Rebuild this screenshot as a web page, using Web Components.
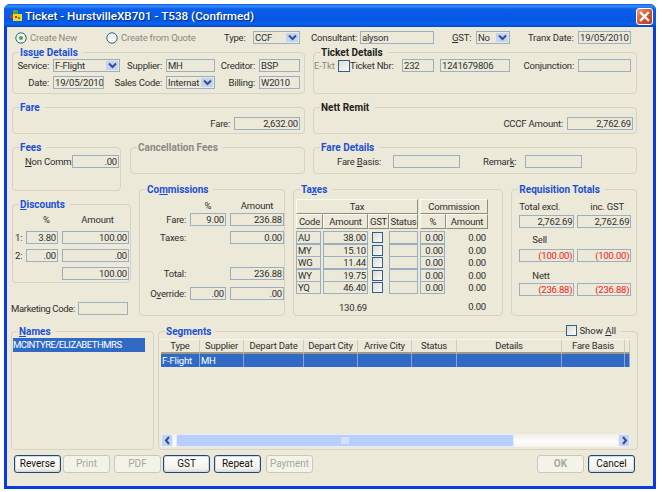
<!DOCTYPE html>
<html>
<head>
<meta charset="utf-8">
<title>Ticket</title>
<style>
  body { margin: 0; background: #fff; font: 9.5px Roboto, "Liberation Sans", Arial, sans-serif; letter-spacing: -0.2px; color: #2e2e2e; }
</style>
</head>
<body>
<x-window>
  <span slot="title">Ticket - HurstvilleXB701 - T538 (Confirmed)</span>
  <x-ticket-form></x-ticket-form>
</x-window>

<script>
class XWindow extends HTMLElement {
  constructor() {
    super();
    this.attachShadow({ mode: "open" }).innerHTML = `
    <style>
      :host { display: block; box-sizing: border-box; width: 652px; height: 485px; margin: 4px 0 0 4px;
        background: #0a3be0; border-radius: 6px 6px 0 0; padding: 0 3px 3px; }
      .bar { height: 23px; margin: 0 -3px; padding: 0 3px 0 6px; display: flex; align-items: center; gap: 3px;
        border-radius: 6px 6px 0 0;
        background: linear-gradient(#0a5fe6 0, #3a8efc 2px, #0a5ee8 5px, #0458e4 16px, #0a62ee 20px, #0446c8 23px); }
      .title { flex: 1; color: #fff; font: 500 11.7px Roboto, "Liberation Sans", Arial, sans-serif; letter-spacing: 0; text-shadow: 1px 1px 1px #0a2a80; }
      .close { width: 17px; height: 17px; box-sizing: border-box; border: 1px solid #fff; border-radius: 3px; margin-top: 1px;
        background: linear-gradient(135deg, #ec9a80, #d8502c 55%, #bd3a14); display: flex; align-items: center; justify-content: center; }
      .client { height: 459px; background: #ece9d8; }
    </style>
    <div class="bar">
      <svg width="12" height="12" viewBox="0 0 12 12">
        <rect x="3" y="0" width="5" height="4" fill="#4fa03a"/>
        <rect x="0" y="5" width="3" height="3" fill="#d8303a"/>
        <rect x="3" y="4" width="9" height="7" fill="#f2d820"/>
        <rect x="5" y="6" width="2" height="2" fill="#6a5a10"/>
        <rect x="8" y="7" width="2" height="2" fill="#8a7a18"/>
      </svg>
      <div class="title"><slot name="title"></slot></div>
      <div class="close">
        <svg width="11" height="11" viewBox="0 0 11 11"><path d="M2 2 L9 9 M9 2 L2 9" stroke="#fff" stroke-width="2.4" stroke-linecap="square"/></svg>
      </div>
    </div>
    <div class="client"><slot></slot></div>`;
  }
}

class XGroup extends HTMLElement {
  constructor() {
    super();
    this.attachShadow({ mode: "open" }).innerHTML = `
    <style>
      :host { display: block; box-sizing: border-box; position: relative; border: 1px solid #d6d3c3; border-radius: 4px; }
      .legend { position: absolute; top: -7px; left: 6px; padding: 0 5px 0 1px; background: #ece9d8; font-weight: bold; font-size: 10px; letter-spacing: 0; color: #1c4fd6; line-height: 13px; white-space: nowrap; }
      :host([tone="black"]) .legend { color: #222; }
      :host([tone="gray"]) .legend { color: #8a8a80; }
    </style>
    <div class="legend"><slot name="legend"></slot></div>
    <slot></slot>`;
  }
}

class XField extends HTMLElement {
  constructor() {
    super();
    this.attachShadow({ mode: "open" }).innerHTML = `
    <style>
      :host { display: block; box-sizing: border-box; height: 13px; border: 1px solid #9aafc2; background: #ece9d8;
        padding: 0 1px; line-height: 11px; white-space: nowrap; overflow: hidden; color: #2e2e2e; }
      :host([num]) { text-align: right; }
      :host([red]) { color: #f02020; }
    </style><slot></slot>`;
  }
}

class XSelect extends HTMLElement {
  constructor() {
    super();
    this.attachShadow({ mode: "open" }).innerHTML = `
    <style>
      :host { display: flex; box-sizing: border-box; height: 13px; border: 1px solid #9aafc2; background: #ece9d8; line-height: 11px; color: #2e2e2e; }
      .v { flex: 1; padding-left: 1px; overflow: hidden; white-space: nowrap; }
      .b { width: 12px; margin: 1px; background: #c3d3f2; display: flex; align-items: center; justify-content: center; }
    </style>
    <div class="v"><slot></slot></div>
    <div class="b"><svg width="9" height="7" viewBox="0 0 9 7"><path d="M1 1.5 L4.5 5 L8 1.5" fill="none" stroke="#32508c" stroke-width="2"/></svg></div>`;
  }
}

class XRadio extends HTMLElement {
  constructor() {
    super();
    this.attachShadow({ mode: "open" }).innerHTML = `
    <style>
      :host { display: flex; align-items: center; gap: 3px; color: #8a8a80; white-space: nowrap; }
      svg { flex: none; }
    </style>
    <svg width="12" height="12" viewBox="0 0 12 12">
      <circle cx="6" cy="6" r="5.2" fill="#f6f6f0" stroke="#2f6288"/>
      ${this.hasAttribute("checked") ? '<circle cx="6" cy="6" r="2" fill="#3fb13f"/>' : ""}
    </svg>
    <slot></slot>`;
  }
}

class XCheck extends HTMLElement {
  constructor() {
    super();
    this.attachShadow({ mode: "open" }).innerHTML = `
    <style>
      :host { display: block; box-sizing: border-box; width: 11px; height: 11px; border: 1px solid #2f5f8a;
        background: linear-gradient(135deg, #dcdcd2, #fbfbf8); flex: none; }
    </style>`;
  }
}

class XButton extends HTMLElement {
  constructor() {
    super();
    this.attachShadow({ mode: "open" }).innerHTML = `
    <style>
      :host { display: block; box-sizing: border-box; width: 47px; height: 18px; border: 1px solid #1f4a72; border-radius: 3px;
        box-shadow: inset 0 0 0 1px #cfd9ec; background: linear-gradient(#fff, #f3f2ea 80%, #dcd8c6);
        text-align: center; line-height: 15px; font-size: 10px; letter-spacing: 0; color: #111; }
      :host([disabled]) { border-color: #cbc8b8; box-shadow: none; background: #f4f3ea; color: #a8a898; }
    </style><slot></slot>`;
  }
}

class XTaxTable extends HTMLElement {
  constructor() {
    super();
    const rows = [
      ["AU", "38.00"], ["MY", "15.10"], ["WG", "11.44"], ["WY", "19.75"], ["YQ", "46.40"]
    ];
    const body = rows.map(r => `
      <x-field style="margin-right:2px">${r[0]}</x-field>
      <x-field num>${r[1]}</x-field>
      <x-check style="margin:1px 0 0 4px"></x-check>
      <x-field style="margin-right:2px"></x-field>
      <x-field num style="margin-right:1px">0.00</x-field>
      <div class="n">0.00</div>`).join("");
    this.attachShadow({ mode: "open" }).innerHTML = `
    <style>
      :host { display: block; }
      .g { display: grid; grid-template-columns: 27px 45px 21px 31px 26px 42px; }
      .h { box-sizing: border-box; height: 15px; line-height: 14px; text-align: center; background: #ece9d8;
        border: 1px solid; border-color: #fbfbf6 #8f8c7c #8f8c7c #fbfbf6; white-space: nowrap; overflow: hidden; }
      .t { grid-column: span 4; margin-right: 2px; }
      .c { grid-column: span 2; }
      .rows { grid-auto-rows: 12.6px; margin-top: 2px; }
      .n { text-align: right; line-height: 13px; padding-right: 2px; }
      .sum { margin-top: 6px; line-height: 13px; }
    </style>
    <div class="g">
      <div class="h t">Tax</div><div class="h c">Commission</div>
      <div class="h">Code</div><div class="h">Amount</div><div class="h">GST</div><div class="h" style="margin-right:2px">Status</div>
      <div class="h">%</div><div class="h">Amount</div>
    </div>
    <div class="g rows">${body}</div>
    <div class="g sum">
      <div></div><div class="n" style="padding-right:1px;margin-top:1px">130.69</div><div></div><div></div><div></div><div class="n">0.00</div>
    </div>`;
  }
}

class XSegments extends HTMLElement {
  constructor() {
    super();
    const cols = [["Type", 39, "F-Flight"], ["Supplier", 44, "MH"], ["Depart Date", 60], ["Depart City", 54],
      ["Arrive City", 54], ["Status", 45], ["Details", 105], ["Fare Basis", 63], ["", 5]];
    const tpl = cols.map(c => c[1] + "px").join(" ");
    this.attachShadow({ mode: "open" }).innerHTML = `
    <style>
      :host { display: flex; flex-direction: column; height: 100%; }
      .g { display: grid; grid-template-columns: ${tpl}; flex: none; }
      .head div { box-sizing: border-box; height: 15px; line-height: 12px; text-align: center; white-space: nowrap;
        border-right: 1px solid #cfccba; border-top: 1px solid #f8f8f2; border-bottom: 2px solid #9d9a88; }
      .row { height: 13px; background: #316ac5; color: #fff; line-height: 13px; margin-top: 0; }
      .row div { border-right: 1px solid #8ea6cc; padding-left: 1px; white-space: nowrap; overflow: hidden; }
      .space { flex: 1; }
    </style>
    <div class="g head">${cols.map(c => `<div>${c[0]}</div>`).join("")}</div>
    <div class="g row">${cols.map(c => `<div>${c[2] || ""}</div>`).join("")}</div>
    <div class="space"></div>
    <x-hscroll></x-hscroll>`;
  }
}

class XHscroll extends HTMLElement {
  constructor() {
    super();
    this.attachShadow({ mode: "open" }).innerHTML = `
    <style>
      :host { display: flex; height: 13px; background: linear-gradient(#f0efe8, #fdfdfb 60%, #f4f3ec); }
      .a { width: 12px; background: #c3d3f6; border: 1px solid #e8eefc; box-sizing: border-box; display: flex; align-items: center; justify-content: center; flex: none; }
      .th { width: 338px; margin-left: 3px; box-sizing: border-box; background: #b9cffb; border: 1px solid #e4ecfc; border-radius: 2px;
        display: flex; align-items: center; justify-content: center; }
      .sp { flex: 1; }
    </style>
    <div class="a"><svg width="7" height="9" viewBox="0 0 7 9"><path d="M5 1 L2 4.5 L5 8" fill="none" stroke="#33508c" stroke-width="2"/></svg></div>
    <div class="th"><svg width="8" height="7" viewBox="0 0 8 7"><path d="M1 0V7M3 0V7M5 0V7M7 0V7" stroke="#eef3fd" stroke-width="1"/></svg></div>
    <div class="sp"></div>
    <div class="a"><svg width="7" height="9" viewBox="0 0 7 9"><path d="M2 1 L5 4.5 L2 8" fill="none" stroke="#33508c" stroke-width="2"/></svg></div>`;
  }
}

class XTicketForm extends HTMLElement {
  constructor() {
    super();
    this.attachShadow({ mode: "open" }).innerHTML = `
    <style>
      :host { display: block; box-sizing: border-box; height: 459px; padding: 4px 0 0 5px; white-space: nowrap; }
      u { text-decoration: underline; }
      .lbl { text-align: right; line-height: 13px; }
      .lft { line-height: 13px; }
      .row { display: flex; align-items: center; }
      .top { height: 13px; margin-bottom: 8px; }
      .pair { display: grid; grid-template-columns: 293px 324px; column-gap: 8px; }
      .pair + .pair { margin-top: 13px; }

      .issue { height: 42px; padding: 6px 0 0 0; display: grid;
        grid-template-columns: 40px 67px 46px 49px 44px 41px; column-gap: 0; row-gap: 3px; grid-auto-rows: 14px; }
      .issue .lbl { padding-right: 4px; }
      .tick { height: 42px; padding-top: 6px; }
      .short { height: 27px; padding-top: 9px; display: flex; justify-content: flex-end; gap: 4px; }

      .mid { display: flex; margin-top: 13px; }
      .left { width: 118px; flex: none; }
      .right { width: 507px; flex: none; }
      .fees { width: 109px; height: 44px; padding: 7px 0 0 12px; display: flex; gap: 3px; }
      .disc { width: 119px; height: 79px; margin-top: 13px; padding-top: 8px; }
      .dg { display: grid; grid-template-columns: 13px 36px 67px; grid-auto-rows: 14px; row-gap: 4px; }
      .dg .lbl { text-align: left; padding-left: 2px; }
      .mkt { display: flex; gap: 4px; margin: 19px 0 0 -1px; }
      .cancel { width: 175px; height: 27px; }
      .fd { width: 324px; height: 27px; padding-top: 7px; display: flex; }
      .tr { display: flex; gap: 8px; margin: 15px 0 0 9px; }
      .comm { width: 146px; height: 127px; padding-top: 9px; }
      .cg { display: grid; grid-template-columns: 46px 36px 54px; column-gap: 4px; grid-auto-rows: 14px; }
      .cg .lbl { grid-column: 1; }
      .tax { width: 211px; height: 127px; padding: 9px 0 0 2px; }
      .req { width: 126px; height: 127px; padding: 10px 0 0 7px; }
      .rg { display: grid; grid-template-columns: 55px 54px; column-gap: 3px; }

      .bot { display: flex; gap: 4px; margin: 15px 0 0 -1px; }
      .names { width: 143px; height: 119px; padding: 6px 0 0 1px; }
      .sel { width: 132px; height: 14px; background: #316ac5; color: #fff; line-height: 14px; letter-spacing: -0.5px; }
      .seg { width: 480px; height: 119px; padding: 7px 7px 2px 2px; }
      .show { position: absolute; top: -8px; right: 16px; display: flex; align-items: center; gap: 2px; background: #ece9d8; padding-right: 5px; line-height: 13px; letter-spacing: 0; }

      .btns { display: flex; margin: 5px 0 0 2px; }
    </style>

    <div class="row top">
      <x-radio checked style="margin-left:3px;width:91px">Create New</x-radio>
      <x-radio style="width:118px">Create from Quote</x-radio>
      <div class="lft" style="width:29px">Type:</div>
      <x-select style="width:47px">CCF</x-select>
      <div class="lft" style="margin-left:11px;width:49px">Consultant:</div>
      <x-field style="width:74px">alyson</x-field>
      <div class="lft" style="margin-left:18px;width:24px"><u>G</u>ST:</div>
      <x-select style="width:34px">No</x-select>
      <div class="lft" style="margin-left:18px;width:50px">Tranx Date:</div>
      <x-field style="width:53px">19/05/2010</x-field>
    </div>

    <div class="pair">
      <x-group class="issue">
        <span slot="legend">Iss<u>u</u>e Details</span>
        <div class="lbl">Service:</div><x-select>F-Flight</x-select>
        <div class="lbl">Supplier:</div><x-field>MH</x-field>
        <div class="lbl">Creditor:</div><x-field>BSP</x-field>
        <div class="lbl">Date:</div><x-field style="width:51px">19/05/2010</x-field>
        <div class="lbl" style="margin-left:-8px">Sales Code:</div><x-select>Internat</x-select>
        <div class="lbl">Billing:</div><x-field>W2010</x-field>
      </x-group>
      <x-group class="tick" tone="black">
        <span slot="legend">Ticket Details</span>
        <div class="row">
          <div class="lft" style="color:#8a8a80;width:24px">E-Tkt</div>
          <x-check style="width:12px;height:12px"></x-check>
          <div class="lbl" style="width:43px;padding-right:9px;box-sizing:content-box">Ticket Nbr:</div>
          <x-field style="width:32px">232</x-field>
          <x-field style="width:70px;margin-left:6px">1241679806</x-field>
          <div class="lbl" style="width:64px;padding-right:4px">Conjunction:</div>
          <x-field style="width:53px"></x-field>
        </div>
      </x-group>
    </div>

    <div class="pair">
      <x-group class="short" style="padding-right:4px">
        <span slot="legend">Fare</span>
        <div class="lbl">Fare:</div><x-field num style="width:66px">2,632.00</x-field>
      </x-group>
      <x-group class="short" tone="black" style="padding-right:3px">
        <span slot="legend">Nett Remit</span>
        <div class="lbl">CCCF Amount:</div><x-field num style="width:66px">2,762.69</x-field>
      </x-group>
    </div>

    <div class="mid">
      <div class="left">
        <x-group class="fees">
          <span slot="legend">Fees</span>
          <div class="lft" style="width:44px"><u>N</u>on Comm:</div><x-field num style="width:47px">.00</x-field>
        </x-group>
        <x-group class="disc">
          <span slot="legend"><u>D</u>iscounts</span>
          <div class="dg">
            <div></div><div class="lft" style="text-align:center;padding-left:5px">%</div><div class="lft" style="text-align:center;padding-left:4px">Amount</div>
            <div class="lbl">1:</div><x-field num style="width:32px">3.80</x-field><x-field num>100.00</x-field>
            <div class="lbl">2:</div><x-field num style="width:32px">.00</x-field><x-field num>.00</x-field>
            <div></div><div></div><x-field num>100.00</x-field>
          </div>
        </x-group>
        <div class="mkt">
          <div class="lft" style="width:63px;letter-spacing:-0.35px">Marketing Code:</div><x-field style="width:50px"></x-field>
        </div>
      </div>
      <div class="right">
        <div class="row" style="gap:8px;align-items:flex-start">
          <x-group class="cancel" tone="gray"><span slot="legend">Cancellation Fees</span></x-group>
          <x-group class="fd">
            <span slot="legend">Fare Details</span>
            <div class="lft" style="margin-left:23px;width:56px">Fare <u>B</u>asis:</div><x-field style="width:67px"></x-field>
            <div class="lft" style="margin-left:23px;width:42px">Remar<u>k</u>:</div><x-field style="width:57px"></x-field>
          </x-group>
        </div>
        <div class="tr">
          <x-group class="comm">
            <span slot="legend">Co<u>m</u>missions</span>
            <div class="cg">
              <div></div><div class="lft" style="text-align:center">%</div><div class="lft" style="text-align:center">Amount</div>
              <div class="lbl" style="padding-right:0">Fare:</div><x-field num>9.00</x-field><x-field num>236.88</x-field>
            </div>
            <div class="cg" style="margin-top:4px">
              <div class="lbl">Taxes:</div><div></div><x-field num>0.00</x-field>
            </div>
            <div class="cg" style="margin-top:22px">
              <div class="lbl">Total:</div><div></div><x-field num>236.88</x-field>
            </div>
            <div class="cg" style="margin-top:6px">
              <div class="lbl">O<u>v</u>erride:</div><x-field num>.00</x-field><x-field num>.00</x-field>
            </div>
          </x-group>
          <x-group class="tax">
            <span slot="legend">Ta<u>x</u>es</span>
            <x-tax-table></x-tax-table>
          </x-group>
          <x-group class="req">
            <span slot="legend">Requisition Totals</span>
            <div class="rg">
              <div class="lft">Total excl.</div><div class="lft" style="padding-left:13px">inc. GST</div>
            </div>
            <div class="rg" style="margin-top:2px"><x-field num>2,762.69</x-field><x-field num>2,762.69</x-field></div>
            <div class="lft" style="margin:5px 0 0 13px">Sell</div>
            <div class="rg" style="margin-top:3px"><x-field num red>(100.00)</x-field><x-field num red>(100.00)</x-field></div>
            <div class="lft" style="margin:7px 0 0 13px">Nett</div>
            <div class="rg" style="margin-top:1px"><x-field num red>(236.88)</x-field><x-field num red>(236.88)</x-field></div>
          </x-group>
        </div>
      </div>
    </div>

    <div class="bot">
      <x-group class="names">
        <span slot="legend"><u>N</u>ames</span>
        <div class="sel">MCINTYRE/ELIZABETHMRS</div>
      </x-group>
      <x-group class="seg">
        <span slot="legend">Segments</span>
        <div class="show"><x-check></x-check><span>Show <u>A</u>ll</span></div>
        <x-segments></x-segments>
      </x-group>
    </div>

    <div class="btns">
      <x-button>Reverse</x-button>
      <x-button disabled style="margin-left:2px">Print</x-button>
      <x-button disabled style="margin-left:4px">PDF</x-button>
      <x-button style="margin-left:2px">GST</x-button>
      <x-button style="margin-left:4px">Repeat</x-button>
      <x-button disabled style="margin-left:5px">Payment</x-button>
      <x-button disabled style="margin-left:224px;font-weight:bold">OK</x-button>
      <x-button style="margin-left:4px">Cancel</x-button>
    </div>`;
  }
}

customElements.define("x-window", XWindow);
customElements.define("x-group", XGroup);
customElements.define("x-field", XField);
customElements.define("x-select", XSelect);
customElements.define("x-radio", XRadio);
customElements.define("x-check", XCheck);
customElements.define("x-button", XButton);
customElements.define("x-hscroll", XHscroll);
customElements.define("x-tax-table", XTaxTable);
customElements.define("x-segments", XSegments);
customElements.define("x-ticket-form", XTicketForm);
</script>
</body>
</html>
